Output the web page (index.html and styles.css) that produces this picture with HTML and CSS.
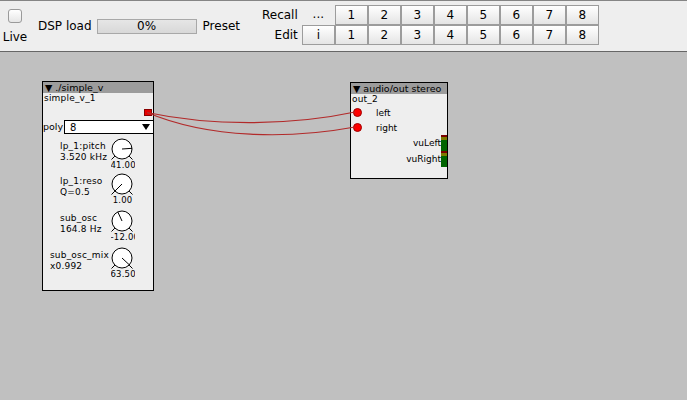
FILE: index.html
```html
<!DOCTYPE html>
<html>
<head>
<meta charset="utf-8">
<link rel="stylesheet" href="styles.css">
</head>
<body>
<div class="toolbar">
  <div class="live"><span class="chk"></span><span class="live-text">Live</span></div>
  <span class="tlabel dsp">DSP load</span>
  <div class="progress">0%</div>
  <span class="tlabel preset">Preset</span>
  <div class="presets">
    <span class="plabel">Recall</span><span class="pdots">...</span>
    <span class="pbtn">1</span><span class="pbtn">2</span><span class="pbtn">3</span><span class="pbtn">4</span><span class="pbtn">5</span><span class="pbtn">6</span><span class="pbtn">7</span><span class="pbtn">8</span>
    <span class="plabel">Edit</span><span class="pbtn">i</span>
    <span class="pbtn">1</span><span class="pbtn">2</span><span class="pbtn">3</span><span class="pbtn">4</span><span class="pbtn">5</span><span class="pbtn">6</span><span class="pbtn">7</span><span class="pbtn">8</span>
  </div>
</div>
<div class="canvas">
  <div class="obj obj1">
    <div class="ohead">▼ ./simple_v</div>
    <div class="oname">simple_v_1</div>
    <div class="outrow"><span class="outlet"></span></div>
    <div class="polyrow">
      <span class="polylabel">poly</span>
      <div class="dropdown"><span>8</span><svg class="ddarrow" width="8" height="6" viewBox="0 0 8 6"><polygon points="0,0 8,0 4,6" fill="#000"/></svg></div>
    </div>
    <div class="krow">
      <div class="klabel"><div>lp_1:pitch</div><div>3.520 kHz</div></div>
      <div class="knob">
        <svg width="26" height="24" viewBox="0 0 26 24"><circle cx="13" cy="11" r="10" fill="#fff" stroke="#000"/><line x1="5.9" y1="18.1" x2="2.5" y2="21.5" stroke="#000"/><line x1="20.1" y1="18.1" x2="23.5" y2="21.5" stroke="#000"/><line x1="13" y1="11" x2="23" y2="10.3" stroke="#000"/></svg>
        <div class="kval">41.00</div>
      </div>
    </div>
    <div class="krow">
      <div class="klabel"><div>lp_1:reso</div><div>Q=0.5</div></div>
      <div class="knob">
        <svg width="26" height="24" viewBox="0 0 26 24"><circle cx="13" cy="11" r="10" fill="#fff" stroke="#000"/><line x1="5.9" y1="18.1" x2="2.5" y2="21.5" stroke="#000"/><line x1="20.1" y1="18.1" x2="23.5" y2="21.5" stroke="#000"/><line x1="13" y1="11" x2="5.9" y2="18.1" stroke="#000"/></svg>
        <div class="kval">1.00</div>
      </div>
    </div>
    <div class="krow">
      <div class="klabel"><div>sub_osc</div><div>164.8 Hz</div></div>
      <div class="knob">
        <svg width="26" height="24" viewBox="0 0 26 24"><circle cx="13" cy="11" r="10" fill="#fff" stroke="#000"/><line x1="5.9" y1="18.1" x2="2.5" y2="21.5" stroke="#000"/><line x1="20.1" y1="18.1" x2="23.5" y2="21.5" stroke="#000"/><line x1="13" y1="11" x2="8.8" y2="1.9" stroke="#000"/></svg>
        <div class="kval">-12.00</div>
      </div>
    </div>
    <div class="krow">
      <div class="klabel"><div>sub_osc_mix</div><div>x0.992</div></div>
      <div class="knob">
        <svg width="26" height="24" viewBox="0 0 26 24"><circle cx="13" cy="11" r="10" fill="#fff" stroke="#000"/><line x1="5.9" y1="18.1" x2="2.5" y2="21.5" stroke="#000"/><line x1="20.1" y1="18.1" x2="23.5" y2="21.5" stroke="#000"/><line x1="13" y1="11" x2="20.3" y2="17.8" stroke="#000"/></svg>
        <div class="kval">63.50</div>
      </div>
    </div>
  </div>

  <div class="obj obj2">
    <div class="ohead">▼ audio/out stereo</div>
    <div class="oname">out_2</div>
    <div class="inrow"><span class="inlet"></span><span class="inlabel">left</span></div>
    <div class="inrow"><span class="inlet"></span><span class="inlabel">right</span></div>
    <div class="vurow"><span>vuLeft</span><span class="vu"></span></div>
    <div class="vurow"><span>vuRight</span><span class="vu"></span></div>
  </div>

  <svg class="wires" width="687" height="348" viewBox="0 0 687 348">
    <path d="M147,60.5 C210,74 290,74 355,60" fill="none" stroke="#b22a2a" stroke-width="1.2"/>
    <path d="M147,60.5 C210,87 290,87 355,75" fill="none" stroke="#b22a2a" stroke-width="1.2"/>
  </svg>
</div>
</body>
</html>
```
FILE: styles.css
```css
* { box-sizing: border-box; }
html, body { margin: 0; padding: 0; }
body {
  width: 687px;
  height: 400px;
  overflow: hidden;
  font-family: "DejaVu Sans", sans-serif;
  color: #000;
  background: #c0c0c0;
}
.toolbar {
  height: 52px;
  background: #eeeeee;
  border-top: 1px solid #858585;
  border-bottom: 1px solid #666;
  display: flex;
  align-items: center;
  font-size: 12px;
}
.live {
  align-self: flex-start;
  display: flex;
  flex-direction: column;
  align-items: center;
  width: 24px;
  margin-left: 3px;
  padding-top: 8px;
}
.chk {
  width: 14px;
  height: 14px;
  border: 1px solid #9a9a9a;
  border-radius: 3px;
  background: linear-gradient(#ffffff, #e6e6e6);
}
.live-text {
  margin-top: 7px;
  line-height: 14px;
}
.tlabel { line-height: 14px; }
.dsp { margin-left: 11px; }
.progress {
  margin-left: 5px;
  width: 100px;
  height: 15px;
  border: 1px solid #a8a8a8;
  background: linear-gradient(#e6e6e6, #d8d8d8);
  text-align: center;
  line-height: 13px;
  font-size: 12px;
}
.preset { margin-left: 6px; }
.presets {
  align-self: flex-start;
  margin-top: 4px;
  margin-left: 22px;
  display: grid;
  grid-template-columns: auto repeat(9, 33px);
  grid-auto-rows: 20px;
}
.plabel {
  text-align: right;
  padding-right: 4px;
  line-height: 20px;
}
.pdots {
  text-align: center;
  line-height: 18px;
}
.pbtn {
  border: 1px solid #9c9c9c;
  background: linear-gradient(#ffffff, #e4e4e4);
  text-align: center;
  line-height: 18px;
}
.canvas {
  position: relative;
  height: 348px;
  background: #c0c0c0;
}
.obj {
  position: absolute;
  background: #eeeeee;
  border: 1px solid #000;
  font-size: 9px;
  display: flex;
  flex-direction: column;
}
.obj1 { left: 42px; top: 29px; width: 112px; height: 210px; }
.obj2 { left: 350px; top: 30px; width: 98px; height: 97px; }
.ohead {
  height: 11px;
  line-height: 11px;
  background: #9c9c9c;
  padding-left: 2px;
  font-size: 9.5px;
  white-space: nowrap;
}
.oname {
  height: 11px;
  line-height: 11px;
  padding-left: 1px;
  letter-spacing: 0.2px;
}
.outrow {
  height: 16px;
  display: flex;
  justify-content: flex-end;
  align-items: center;
  padding-right: 1px;
}
.outlet {
  width: 8px;
  height: 7px;
  background: #e80000;
  border: 1px solid #8a0000;
}
.polyrow {
  height: 14px;
  display: flex;
  align-items: stretch;
}
.polylabel {
  width: 21px;
  line-height: 14px;
  font-size: 9.5px;
}
.dropdown {
  flex: 1;
  margin-right: -1px;
  border: 1px solid #000;
  background: #fff;
  display: flex;
  align-items: center;
  justify-content: space-between;
  padding: 0 3px 0 5px;
  font-size: 10px;
}
.krow {
  display: flex;
  justify-content: flex-end;
  padding-right: 18px;
  height: 37px;
}
.polyrow + .krow { margin-top: 4px; height: 35px; }
.klabel {
  min-width: 49px;
  padding-top: 3px;
  line-height: 11px;
  white-space: nowrap;
  letter-spacing: 0.2px;
}
.knob {
  width: 26px;
  display: flex;
  flex-direction: column;
  align-items: center;
}
.knob svg { display: block; }
.kval {
  width: 24px;
  margin-top: -2px;
  margin-left: 1px;
  line-height: 10px;
  font-size: 8.5px;
  text-align: center;
  overflow: hidden;
  white-space: nowrap;
  letter-spacing: 0.2px;
}
.inrow {
  height: 15px;
  display: flex;
  align-items: center;
  padding-left: 2px;
}
.inlet {
  width: 9px;
  height: 9px;
  border-radius: 50%;
  background: #ff0000;
  border: 1px solid #a00000;
}
.inlabel { margin-left: 14px; }
.vurow {
  height: 16px;
  display: flex;
  justify-content: flex-end;
  align-items: center;
}
.vu {
  width: 6px;
  height: 16px;
  background: linear-gradient(#7a0000 0, #7a0000 2px, #7c7a00 2px, #7c7a00 5px, #006400 5px);
}
.wires {
  position: absolute;
  left: 0;
  top: 0;
  pointer-events: none;
}
```
